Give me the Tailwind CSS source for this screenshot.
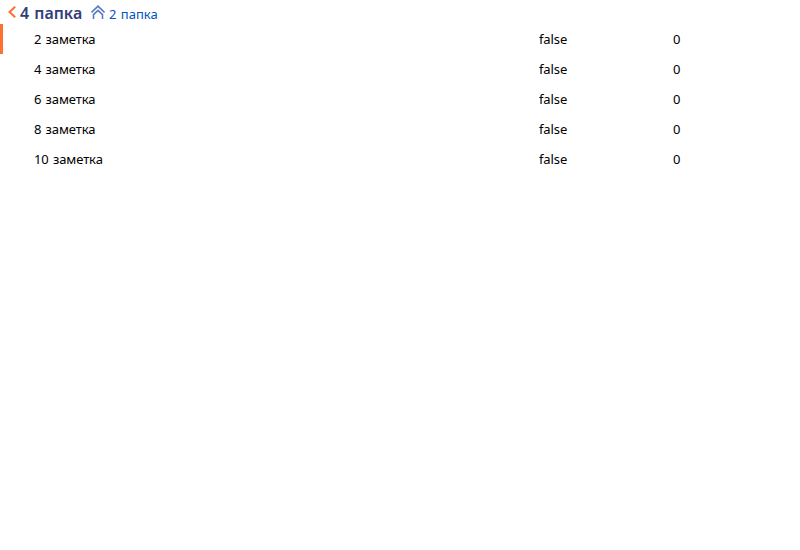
<!DOCTYPE html>
<html lang="ru"><head><meta charset="utf-8"><title>4 папка</title><script src="https://cdn.jsdelivr.net/npm/@tailwindcss/browser@4"></script></head>
<body class="bg-white font-['Noto_Sans',sans-serif] text-[13px] text-black">
<header class="flex h-6 items-center pt-[2px] pl-2">
<svg class="mb-[2px] h-3 w-2 shrink-0" viewBox="0 0 8 12" fill="none" stroke="#ff7033" stroke-width="2"><path d="M7.2.7 1.5 6l5.7 5.3"/></svg>
<h1 class="ml-1 w-[71px] text-[16px] leading-5 font-semibold [word-spacing:1px] whitespace-nowrap text-[#313e78]">4 папка</h1>
<svg class="mb-[2px] h-[14px] w-[14px] shrink-0" viewBox="0 0 14 14" fill="none" stroke="#587ac0" stroke-width="1.6"><path d="m.5 7.5 6.5-6.3 6.5 6.3M2.5 14V9.7L7 5.4l4.5 4.3V14"/></svg>
<a class="ml-1 pt-[2px] leading-5 [word-spacing:1px] text-[#0055bb]">2 папка</a>
</header>
<main class="leading-[30px] [word-spacing:1px] tracking-[-0.1px]">
<div class="grid h-[30px] grid-cols-[505px_134px_1fr] border-l-[3px] border-[#ff7033] pl-[31px]"><span>2 заметка</span><span>false</span><span>0</span></div>
<div class="grid h-[30px] grid-cols-[505px_134px_1fr] pl-[34px]"><span>4 заметка</span><span>false</span><span>0</span></div>
<div class="grid h-[30px] grid-cols-[505px_134px_1fr] pl-[34px]"><span>6 заметка</span><span>false</span><span>0</span></div>
<div class="grid h-[30px] grid-cols-[505px_134px_1fr] pl-[34px]"><span>8 заметка</span><span>false</span><span>0</span></div>
<div class="grid h-[30px] grid-cols-[505px_134px_1fr] pl-[34px]"><span>10 заметка</span><span>false</span><span>0</span></div>
</main>
</body></html>
